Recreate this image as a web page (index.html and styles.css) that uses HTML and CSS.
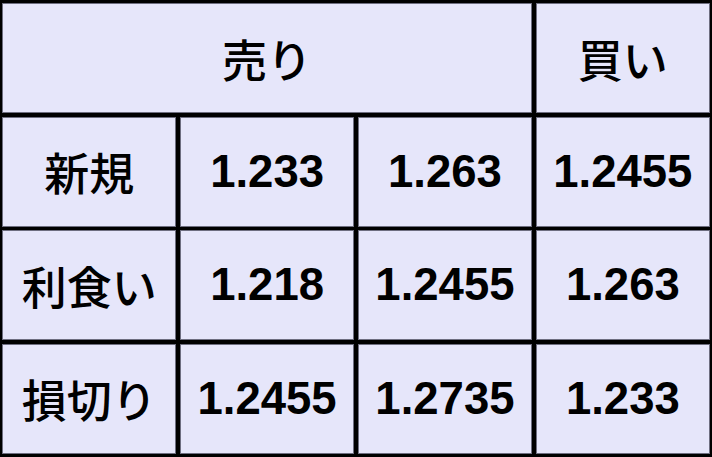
FILE: index.html
```html
<!DOCTYPE html>
<html lang="ja">
<head>
<meta charset="utf-8">
<link rel="stylesheet" href="styles.css">
</head>
<body>
<div class="grid">
  <div class="cell head sell">売り</div>
  <div class="cell head">買い</div>

  <div class="cell label">新規</div>
  <div class="cell num">1.233</div>
  <div class="cell num">1.263</div>
  <div class="cell num">1.2455</div>

  <div class="cell label">利食い</div>
  <div class="cell num">1.218</div>
  <div class="cell num">1.2455</div>
  <div class="cell num">1.263</div>

  <div class="cell label">損切り</div>
  <div class="cell num">1.2455</div>
  <div class="cell num">1.2735</div>
  <div class="cell num">1.233</div>
</div>
</body>
</html>
```
FILE: styles.css
```css
html, body {
  margin: 0;
  padding: 0;
  background: #e6e6fa;
}
.grid {
  box-sizing: border-box;
  width: 712px;
  height: 457px;
  background: #000;
  padding: 3px 2px 3px 2px;
  display: grid;
  grid-template-columns: repeat(4, 1fr);
  grid-template-rows: repeat(4, 1fr);
  gap: 3.5px;
}
.cell {
  background: #e6e6fa;
  display: flex;
  align-items: center;
  justify-content: center;
  color: #000;
  font-size: 45px;
  font-weight: 700;
  white-space: nowrap;
  box-shadow: inset 0 0 0 1px #6e6e80;
}
.sell {
  grid-column: span 3;
}
.head, .label {
  font-family: "Noto Sans CJK JP", "Liberation Sans", sans-serif;
  font-weight: 500;
  font-size: 45px;
}
.num {
  font-family: "Liberation Sans", Arial, sans-serif;
  font-size: 45.5px;
}
```
